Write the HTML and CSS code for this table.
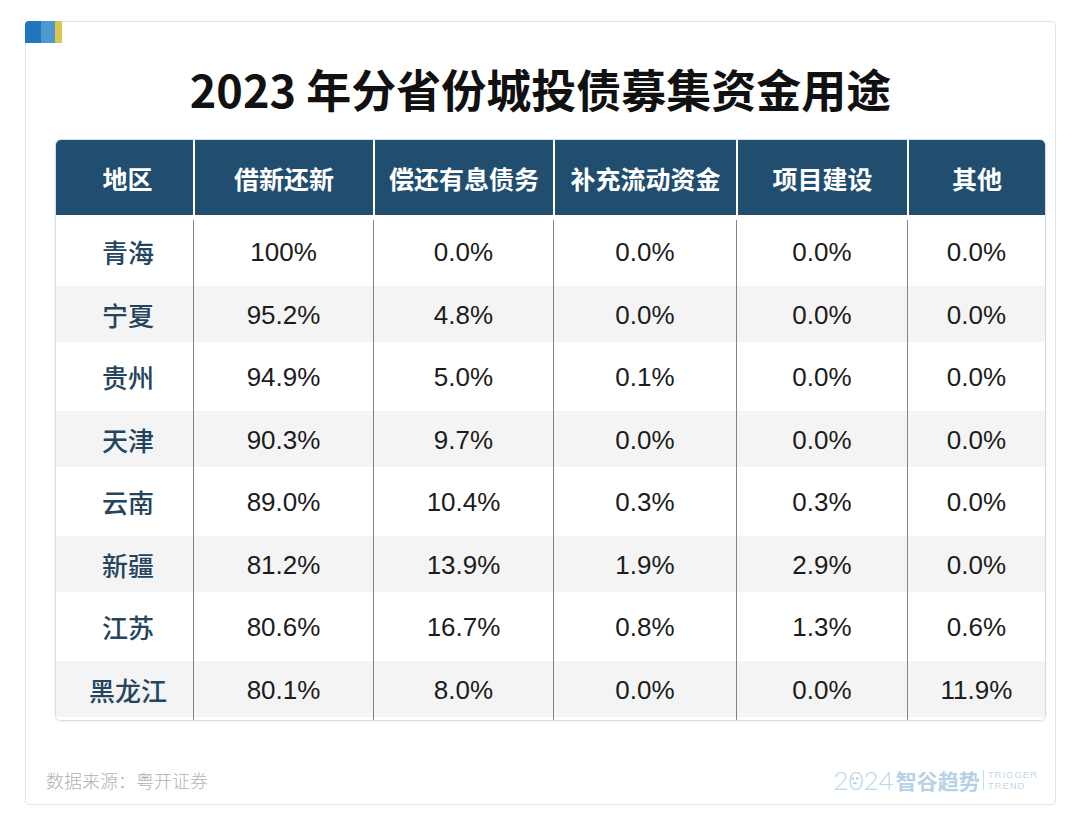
FILE: index.html
```
<!DOCTYPE html>
<html lang="zh-CN">
<head>
<meta charset="utf-8">
<title>2023 年分省份城投债募集资金用途</title>
<link rel="stylesheet" href="styles.css">
</head>
<body>
<div class="card">
  <div class="accent"><span class="a1"></span><span class="a2"></span><span class="a3"></span></div>
  <h1 class="title">2023 年分省份城投债募集资金用途</h1>
  <div class="table">
    <div class="thead">
      <div class="th">地区</div>
      <div class="th">借新还新</div>
      <div class="th">偿还有息债务</div>
      <div class="th">补充流动资金</div>
      <div class="th">项目建设</div>
      <div class="th">其他</div>
    </div>
    <div class="tbody">
      <div class="row"><div class="cell name">青海</div><div class="cell">100%</div><div class="cell">0.0%</div><div class="cell">0.0%</div><div class="cell">0.0%</div><div class="cell">0.0%</div></div>
      <div class="row alt"><div class="cell name">宁夏</div><div class="cell">95.2%</div><div class="cell">4.8%</div><div class="cell">0.0%</div><div class="cell">0.0%</div><div class="cell">0.0%</div></div>
      <div class="row"><div class="cell name">贵州</div><div class="cell">94.9%</div><div class="cell">5.0%</div><div class="cell">0.1%</div><div class="cell">0.0%</div><div class="cell">0.0%</div></div>
      <div class="row alt"><div class="cell name">天津</div><div class="cell">90.3%</div><div class="cell">9.7%</div><div class="cell">0.0%</div><div class="cell">0.0%</div><div class="cell">0.0%</div></div>
      <div class="row"><div class="cell name">云南</div><div class="cell">89.0%</div><div class="cell">10.4%</div><div class="cell">0.3%</div><div class="cell">0.3%</div><div class="cell">0.0%</div></div>
      <div class="row alt"><div class="cell name">新疆</div><div class="cell">81.2%</div><div class="cell">13.9%</div><div class="cell">1.9%</div><div class="cell">2.9%</div><div class="cell">0.0%</div></div>
      <div class="row"><div class="cell name">江苏</div><div class="cell">80.6%</div><div class="cell">16.7%</div><div class="cell">0.8%</div><div class="cell">1.3%</div><div class="cell">0.6%</div></div>
      <div class="row alt"><div class="cell name">黑龙江</div><div class="cell">80.1%</div><div class="cell">8.0%</div><div class="cell">0.0%</div><div class="cell">0.0%</div><div class="cell">11.9%</div></div>
    </div>
  </div>
  <div class="footer">
    <div class="source">数据来源：粤开证券</div>
    <div class="logo">
      <span class="year">2<span class="zero">0<svg class="face" viewBox="0 0 14 20" width="14" height="20"><circle cx="4.8" cy="8.5" r="1.2"/><circle cx="9.2" cy="8.5" r="1.2"/><path d="M4.6 13.2 Q7 11.4 9.4 13.2 Q7 15.2 4.6 13.2 Z"/></svg></span>24</span>
      <span class="brand">智谷趋势</span>
      <span class="divider"></span>
      <span class="en"><span>TRIGGER</span><span>TREND</span></span>
    </div>
  </div>
</div>
</body>
</html>
```
FILE: styles.css
```
* { box-sizing: border-box; }
body {
  margin: 0;
  background: #ffffff;
  font-family: "Noto Sans CJK SC", "Noto Sans", sans-serif;
}
.card {
  position: relative;
  margin: 21px 0 0 25px;
  width: 1031px;
  height: 784px;
  border: 1px solid #e4e4e4;
  border-radius: 4px;
}
.accent {
  position: absolute;
  left: -1px;
  top: -1px;
  display: flex;
  height: 22px;
  border-top-left-radius: 4px;
  overflow: hidden;
}
.a1 { width: 16px; background: #1f78bf; }
.a2 { width: 14px; background: #4b98d2; }
.a3 { width: 7px; background: #dcc64b; }
.title {
  margin: 36px 0 0;
  text-align: center;
  font-size: 45px;
  font-weight: 700;
  line-height: 62px;
  color: #111111;
}
.table {
  margin: 19px 0 0 29px;
  width: 991px;
  border: 1px solid #d2dee7;
  border-radius: 6px;
  overflow: hidden;
  box-shadow: 0 1px 3px rgba(40, 70, 100, 0.08);
}
.thead, .row {
  display: grid;
  grid-template-columns: 137px 180px 180px 183px 171px 1fr;
}
.thead {
  height: 75px;
  background: #214e6f;
}
.th {
  display: flex;
  align-items: center;
  justify-content: center;
  color: #ffffff;
  font-size: 25px;
  font-weight: 700;
}
.th:first-child { padding-left: 6px; }
.th + .th { border-left: 2px solid #ffffff; }
.tbody { padding-top: 5px; }
.row { height: 62.5px; }
.row.alt {
  background: linear-gradient(#ffffff 3px, #f4f4f4 3px, #f4f4f4 calc(100% - 3px), #ffffff calc(100% - 3px));
}
.cell {
  display: flex;
  align-items: center;
  justify-content: center;
  padding-top: 3px;
  font-family: "Liberation Sans", "Noto Sans CJK SC", sans-serif;
  font-size: 26px;
  color: #1c1c1c;
}
.cell + .cell { border-left: 1px solid #73879a; }
.cell.name {
  padding: 1px 0 0 7px;
  font-family: "Noto Sans CJK SC", sans-serif;
  font-size: 26px;
  font-weight: 500;
  color: #25455f;
}
.footer {
  margin-top: 44px;
  height: 30px;
  display: flex;
  align-items: center;
  justify-content: space-between;
  padding: 0 17px 0 20px;
}
.source {
  font-size: 18px;
  font-weight: 300;
  color: #b2b2b2;
}
.logo {
  display: flex;
  align-items: center;
  color: #b7d3e7;
}
.year {
  font-family: "Lato", "Open Sans", sans-serif;
  font-weight: 300;
  font-size: 26px;
  line-height: 30px;
  color: #bcd6ea;
}
.zero { position: relative; }
.face {
  position: absolute;
  left: 0;
  top: 6px;
  fill: #b0cde3;
}
.brand {
  margin-left: 2px;
  font-size: 21px;
  font-weight: 700;
  line-height: 30px;
  color: #b5d2e6;
}
.divider {
  width: 1px;
  height: 20px;
  margin: 0 4px 0 3px;
  background: #cadcea;
}
.en {
  display: flex;
  flex-direction: column;
  font-family: "Liberation Sans", sans-serif;
  font-size: 9.5px;
  line-height: 11.5px;
  letter-spacing: 1px;
  color: #c3d7e6;
}
```
